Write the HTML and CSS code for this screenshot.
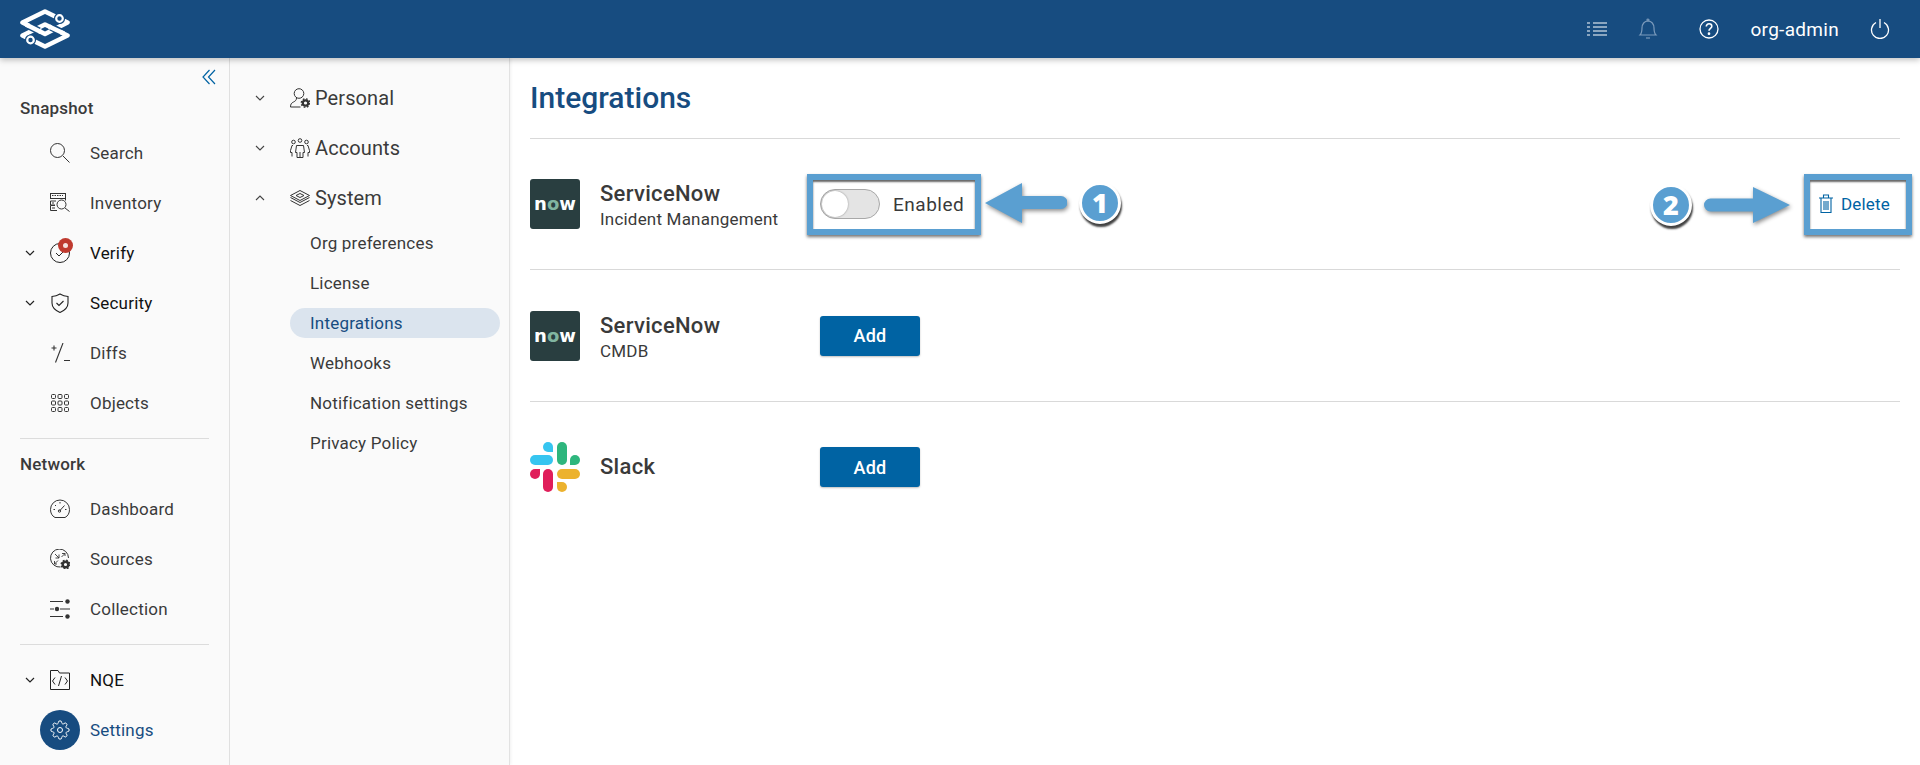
FILE: index.html
```html
<!DOCTYPE html>
<html lang="en">
<head>
<meta charset="utf-8">
<title>Integrations</title>
<link rel="stylesheet" href="styles.css">
</head>
<body>
<header class="topbar">
  <svg class="logo" viewBox="0 0 50 40" fill="none" stroke="#fff" stroke-width="4.600" stroke-linejoin="round">
    <path d="M2.500 26.500 25 15.500 47.500 26.500 25 37.500z"/>
    <path d="M2.500 13.500 25 2.500 47.500 13.500 25 25z"/>
    <path d="M9 17 19 22" stroke="#174c80" stroke-width="7.500"/>
    <path d="M6 15.500 21 23"/>
    <path d="M41 23 31 18" stroke="#174c80" stroke-width="7.500"/>
    <path d="M44 24.500 29 17.500"/>
    <circle cx="39.500" cy="9.500" r="5.600" fill="#174c80" stroke="none"/>
    <circle cx="39.500" cy="9.500" r="3.300" fill="#174c80" stroke-width="2.200"/>
    <circle cx="10.500" cy="31" r="5.600" fill="#174c80" stroke="none"/>
    <circle cx="10.500" cy="31" r="3.300" fill="#174c80" stroke-width="2.200"/>
  </svg>
  <div class="top-actions">
    <svg class="ti ti-list" viewBox="0 0 20 14" fill="none" stroke="#fff" stroke-width="1.200"><path d="M6 1h14M6 5h14M6 9h14M6 13h14M0 1h3M0 5h3M0 9h3M0 13h3"/></svg>
    <svg class="ti ti-bell" viewBox="0 0 20 22" fill="none" stroke="#7b9abb" stroke-width="1.200"><path d="M2 17c2-2 2-4 2-7 0-4 2.500-7 6-7s6 3 6 7c0 3 0 5 2 7z"/><path d="M8 20h4"/><circle cx="10" cy="2" r="1"/></svg>
    <svg class="ti ti-help" viewBox="0 0 20 20" fill="none" stroke="#fff" stroke-width="1.300"><circle cx="10" cy="10" r="9"/><path d="M7.300 7.500c0-1.600 1.200-2.700 2.800-2.700s2.700 1 2.700 2.400c0 2.200-2.800 2.200-2.800 4.600" stroke-width="1.600"/><circle cx="10" cy="14.700" r=".7" fill="#fff"/></svg>
    <span class="username">org-admin</span>
    <svg class="ti ti-power" viewBox="0 0 20 20" fill="none" stroke="#fff" stroke-width="1.300"><path d="M6 3.500a8.500 8.500 0 1 0 8 0"/><path d="M10 0v9"/></svg>
  </div>
</header>

<div class="body-row">
  <nav class="rail">
    <div class="collapse"><svg class="collapse-icon" viewBox="0 0 14 16" fill="none" stroke="#0063a3" stroke-width="1.200"><path d="M7.500 1 1 8l6.500 7M13 1 6.500 8l6.500 7"/></svg></div>
    <div class="heading">Snapshot</div>
    <a class="item"><span class="caret"></span><svg class="icon" viewBox="0 0 20 20" fill="none" stroke="#333"><circle cx="7.500" cy="7.500" r="7"/><path d="m13 13 6.500 6.500"/></svg><span>Search</span></a>
    <a class="item"><span class="caret"></span><svg class="icon" viewBox="0 0 20 20" fill="none" stroke="#333"><rect x=".5" y=".5" width="15" height="5"/><path d="M2 2.500h11" stroke-dasharray="1.500 1"/><path d="M6 8H.5v4H5M5 12.500H.5v5H7M15.500 5.500v2"/><path d="M2 10h2M2 15h3"/><circle cx="11.500" cy="11.500" r="4.500"/><path d="m15 15 4.500 3.500"/></svg><span>Inventory</span></a>
    <a class="item strong"><span class="caret"><svg viewBox="0 0 10 6" fill="none" stroke="#222" stroke-width="1.200"><path d="m1 1 4 4 4-4"/></svg></span><span class="icon-wrap"><svg class="icon" viewBox="0 0 20 20" fill="none" stroke="#222"><circle cx="10" cy="10" r="9.500"/><path d="m6 10 3 3 5-5"/></svg><span class="badge"></span></span><span>Verify</span></a>
    <a class="item strong"><span class="caret"><svg viewBox="0 0 10 6" fill="none" stroke="#222" stroke-width="1.200"><path d="m1 1 4 4 4-4"/></svg></span><svg class="icon" viewBox="0 0 20 20" fill="none" stroke="#222" stroke-width="1.100"><path d="M10 1c2.500 1.500 5 2.300 8 2.500V10c0 4.500-3.500 7.500-8 9.500C5.500 17.500 2 14.500 2 10V3.500C5 3.300 7.500 2.500 10 1z"/><path d="m6.500 10 2.500 2.500 4.500-4.500"/></svg><span>Security</span></a>
    <a class="item"><span class="caret"></span><svg class="icon" viewBox="0 0 20 20" fill="none" stroke="#333" stroke-width="1.100"><path d="M1.500 5h5M4 2.500v5M13 0 5.500 19.500M14 17.500h6"/></svg><span>Diffs</span></a>
    <a class="item"><span class="caret"></span><svg class="icon" viewBox="0 0 20 20" fill="none" stroke="#333"><rect x="1.500" y="1.500" width="4" height="4" rx="1"/><rect x="8" y="1.500" width="4" height="4" rx="1"/><rect x="14.500" y="1.500" width="4" height="4" rx="1"/><rect x="1.500" y="8" width="4" height="4" rx="1"/><rect x="8" y="8" width="4" height="4" rx="1"/><rect x="14.500" y="8" width="4" height="4" rx="1"/><rect x="1.500" y="14.500" width="4" height="4" rx="1"/><rect x="8" y="14.500" width="4" height="4" rx="1"/><rect x="14.500" y="14.500" width="4" height="4" rx="1"/></svg><span>Objects</span></a>
    <hr class="rule">
    <div class="heading">Network</div>
    <a class="item"><span class="caret"></span><svg class="icon" viewBox="0 0 20 20" fill="none" stroke="#333"><path d="M5 18.500C2 17 .5 14 .5 10.500a9.500 9.500 0 0 1 19 0c0 3.500-1.500 6.500-4.500 8z"/><path d="m9.500 12 5-5.500"/><circle cx="9.500" cy="12" r="1.200"/><path d="M10 3v1.500M3.500 10.500H5M15 10.500h1.500M5 6l1 1"/></svg><span>Dashboard</span></a>
    <a class="item"><span class="caret"></span><svg class="icon" viewBox="0 0 20 20" fill="none" stroke="#333"><path d="M10.500 18A9 9 0 1 1 18.500 9"/><path d="m5 5 4 4M9 5.500V9H5.500M15 4.500l-3.500 3.500M12 4.500h3V7M4.500 15l3.500-3.500M4.500 12v3H7" stroke-width=".9"/><circle cx="15.500" cy="15.500" r="2.800" fill="none" stroke="#333" stroke-width="2.400"/><circle cx="15.500" cy="15.500" r="4.300" stroke="#333" stroke-width="1.400" stroke-dasharray="1.700 1.700"/></svg><span>Sources</span></a>
    <a class="item"><span class="caret"></span><svg class="icon" viewBox="0 0 20 20" fill="none" stroke="#333"><path d="M0 2.500h13M0 10h4M10 10h10M0 17.500h13"/><circle cx="17.500" cy="2.500" r="2.200" fill="#333" stroke="none"/><circle cx="7" cy="10" r="2.200" fill="#333" stroke="none"/><circle cx="17.500" cy="17.500" r="2.200" fill="#333" stroke="none"/></svg><span>Collection</span></a>
    <hr class="rule">
    <a class="item strong"><span class="caret"><svg viewBox="0 0 10 6" fill="none" stroke="#222" stroke-width="1.200"><path d="m1 1 4 4 4-4"/></svg></span><svg class="icon" viewBox="0 0 20 20" fill="none" stroke="#222"><path d="M.5 19.500V.5h7.500l1.500 2.500h10v16.500z"/><path d="M5 7.500 2.500 11 5 14.500M15 7.500l2.500 3.500-2.500 3.500M11.500 6 8.500 16"/></svg><span>NQE</span></a>
    <a class="item active"><span class="caret"></span><span class="icon-disc"><svg class="icon" viewBox="0 0 24 24" fill="none" stroke="#fff" stroke-width="1.200"><circle cx="12" cy="12" r="3"/><path d="M19.400 15a1.650 1.650 0 0 0 .33 1.820l.06.06a2 2 0 0 1 0 2.830 2 2 0 0 1-2.830 0l-.06-.06a1.650 1.650 0 0 0-1.820-.33 1.650 1.650 0 0 0-1 1.510V21a2 2 0 0 1-2 2 2 2 0 0 1-2-2v-.09A1.650 1.650 0 0 0 9 19.400a1.650 1.650 0 0 0-1.820.33l-.06.06a2 2 0 0 1-2.830 0 2 2 0 0 1 0-2.830l.06-.06a1.650 1.650 0 0 0 .33-1.820 1.650 1.650 0 0 0-1.510-1H3a2 2 0 0 1-2-2 2 2 0 0 1 2-2h.09A1.650 1.650 0 0 0 4.600 9a1.650 1.650 0 0 0-.33-1.820l-.06-.06a2 2 0 0 1 0-2.830 2 2 0 0 1 2.830 0l.06.06a1.650 1.650 0 0 0 1.820.33H9a1.650 1.650 0 0 0 1-1.510V3a2 2 0 0 1 2-2 2 2 0 0 1 2 2v.09a1.650 1.650 0 0 0 1 1.510 1.650 1.650 0 0 0 1.820-.33l.06-.06a2 2 0 0 1 2.830 0 2 2 0 0 1 0 2.830l-.06.06a1.650 1.650 0 0 0-.33 1.820V9a1.650 1.650 0 0 0 1.510 1H21a2 2 0 0 1 2 2 2 2 0 0 1-2 2h-.09a1.650 1.650 0 0 0-1.510 1z"/></svg></span><span>Settings</span></a>
  </nav>

  <nav class="subnav">
    <a class="group"><span class="group-caret"><svg viewBox="0 0 10 6" fill="none" stroke="#444" stroke-width="1.100"><path d="m1 1 4 4 4-4"/></svg></span><svg class="group-icon" viewBox="0 0 20 20" fill="none" stroke="#333"><circle cx="9" cy="5.500" r="4.800"/><path d="M6.500 10c0 2-1 3-3 4-2 1-3 2-3 5h10"/><circle cx="15.500" cy="15" r="2.700" stroke-width="2.200"/><circle cx="15.500" cy="15" r="4.200" stroke-width="1.400" stroke-dasharray="1.700 1.600"/></svg><span>Personal</span></a>
    <a class="group"><span class="group-caret"><svg viewBox="0 0 10 6" fill="none" stroke="#444" stroke-width="1.100"><path d="m1 1 4 4 4-4"/></svg></span><svg class="group-icon" viewBox="0 0 20 20" fill="none" stroke="#333"><circle cx="10" cy="2.500" r="1.800"/><circle cx="3.500" cy="4" r="1.800"/><circle cx="16.500" cy="4" r="1.800"/><path d="M6.500 7.500h7l1 7h-1.500v5h-6v-5H5.500z"/><path d="M3 7.500h-1l-1.500 5v2h1.500v4M17 7.500h1l1.500 5v2H18v4M10 14v5"/></svg><span>Accounts</span></a>
    <a class="group"><span class="group-caret"><svg class="flip" viewBox="0 0 10 6" fill="none" stroke="#444" stroke-width="1.100"><path d="m1 1 4 4 4-4"/></svg></span><svg class="group-icon" viewBox="0 0 20 16" fill="none" stroke="#333"><path d="M10 .5 19.500 5.500 10 10.500.5 5.500z"/><path d="M.5 7.500 10 12.500l9.500-5M.5 10.500 10 15.500l9.500-5"/><path d="M6 5.500 10 3.500l4 2-4 2z"/></svg><span>System</span></a>
    <a class="link">Org preferences</a>
    <a class="link">License</a>
    <a class="link current">Integrations</a>
    <a class="link">Webhooks</a>
    <a class="link">Notification settings</a>
    <a class="link">Privacy Policy</a>
  </nav>

  <main class="main">
    <h1 class="title">Integrations</h1>
    <hr class="rule-main">
    <section class="row">
      <div class="sn-logo">n<span class="sn-o">o</span>w</div>
      <div class="row-text"><div class="row-name">ServiceNow</div><div class="row-sub">Incident Manangement</div></div>
      <div class="switch"><span class="track"><span class="thumb"></span></span><span class="switch-label">Enabled</span></div>
      <button class="delete"><svg class="trash" viewBox="0 0 14 20" fill="none" stroke="#0063a3" stroke-width="1.100"><path d="M0 4h14M4.500 3.500V1h5v2.500M2 4v14.500h10V4M5 7v9M7 7v9M9 7v9"/></svg>Delete</button>
    </section>
    <hr class="rule-main">
    <section class="row row-tall">
      <div class="sn-logo">n<span class="sn-o">o</span>w</div>
      <div class="row-text"><div class="row-name">ServiceNow</div><div class="row-sub">CMDB</div></div>
      <button class="add">Add</button>
    </section>
    <hr class="rule-main">
    <section class="row">
      <svg class="slack" viewBox="0 0 50 50">
        <rect x="0" y="13" width="23" height="10" rx="5" fill="#36c5f0"/><path d="M23 10h-5a5 5 0 1 1 5-5z" fill="#36c5f0"/>
        <rect x="27" y="0" width="10" height="23" rx="5" fill="#2eb67d"/><path d="M40 23v-5a5 5 0 1 1 5 5z" fill="#2eb67d"/>
        <rect x="27" y="27" width="23" height="10" rx="5" fill="#ecb22e"/><path d="M27 40h5a5 5 0 1 1-5 5z" fill="#ecb22e"/>
        <rect x="13" y="27" width="10" height="23" rx="5" fill="#e01e5a"/><path d="M10 27v5a5 5 0 1 1-5-5z" fill="#e01e5a"/>
      </svg>
      <div class="row-text"><div class="row-name">Slack</div></div>
      <button class="add">Add</button>
    </section>
  </main>
</div>

<div class="callout-box box-switch"></div>
<div class="callout-box box-delete"></div>
<svg class="arrow arrow-left" viewBox="0 0 82 40"><path d="M0 20 37 0v13h39a6.500 6.500 0 0 1 0 13H37v14z" fill="#5a9fd1"/></svg>
<svg class="arrow arrow-right" viewBox="0 0 86 36"><path d="M86 18 49 0v11.500H6.500a6.500 6.500 0 0 0 0 13H49V36z" fill="#5a9fd1"/></svg>
<div class="step step-1">1</div>
<div class="step step-2">2</div>
</body>
</html>
```
FILE: styles.css
```css
* { box-sizing: border-box; }
html, body { margin: 0; height: 100%; }
body {
  position: relative;
  height: 765px;
  overflow: hidden;
  background: #fff;
  color: #3a3a3a;
  font-family: Roboto, "Liberation Sans", sans-serif;
  font-size: 17px;
  display: flex;
  flex-direction: column;
}
.topbar {
  height: 58px;
  flex: none;
  background: #174c80;
  display: flex;
  align-items: center;
  justify-content: space-between;
  padding-left: 20px;
  box-shadow: 0 2px 6px rgba(0, 0, 0, .25);
  position: relative;
  z-index: 2;
}
.logo { width: 50px; height: 40px; display: block; }
.top-actions { display: flex; align-items: center; color: #fff; height: 100%; }
.ti { display: block; flex: none; }
.ti-list { width: 20px; height: 14px; margin-right: 31px; }
.ti-bell { width: 20px; height: 22px; margin-right: 41px; }
.ti-help { width: 20px; height: 20px; margin-right: 31px; }
.username { font-size: 19px; letter-spacing: .3px; margin-right: 31px; white-space: nowrap; }
.ti-power { width: 20px; height: 20px; margin-right: 30px; }

.body-row { flex: 1; display: flex; min-height: 0; }
.rail {
  width: 230px;
  flex: none;
  background: #fafafa;
  border-right: 1px solid #e2e2e2;
  padding: 0 20px;
}
.collapse { height: 36px; display: flex; justify-content: flex-end; align-items: flex-end; padding-bottom: 9px; margin-right: -7px; }
.collapse-icon { width: 14px; height: 16px; display: block; }
.heading { height: 28px; line-height: 29px; font-weight: 500; letter-spacing: .2px; margin-bottom: 6px; }
.rule { border: 0; border-top: 1px solid #dcdcdc; margin: 10px 0; }
.rule + .heading { margin-top: 11px; }
.item {
  height: 50px;
  display: flex;
  align-items: center;
  margin-left: -20px;
  letter-spacing: .2px;
  white-space: nowrap;
}
.item .caret { width: 50px; flex: none; padding-left: 25px; display: flex; }
.caret svg { width: 10px; height: 6px; display: block; }
.icon { width: 20px; height: 20px; display: block; flex: none; }
.item > .icon, .item > .icon-wrap { margin-right: 20px; }
.icon-wrap { position: relative; display: block; }
.badge {
  position: absolute;
  right: -3px;
  top: -5px;
  width: 15px;
  height: 15px;
  border-radius: 50%;
  background: #bf3a2f;
}
.badge::after {
  content: "";
  position: absolute;
  left: 5px;
  top: 5px;
  width: 5px;
  height: 5px;
  border-radius: 50%;
  background: #f5e2df;
}
.strong { color: #111; }
.active { color: #174c80; }
.active .caret { width: 40px; }
.icon-disc {
  width: 40px;
  height: 40px;
  border-radius: 50%;
  background: #174c80;
  display: flex;
  align-items: center;
  justify-content: center;
  margin-right: 10px;
  flex: none;
}

.subnav {
  width: 280px;
  flex: none;
  display: flex;
  flex-direction: column;
  background: #fafafa;
  border-right: 1px solid #e2e2e2;
  box-shadow: 1px 0 3px rgba(0, 0, 0, .06);
  padding-top: 15px;
}
.group {
  height: 50px;
  flex: none;
  display: flex;
  align-items: center;
  font-size: 20px;
  letter-spacing: .1px;
}
.group-caret { width: 60px; padding-left: 25px; flex: none; display: flex; }
.group-caret svg { width: 10px; height: 6px; display: block; }
.flip { transform: rotate(180deg); }
.group-icon { width: 20px; height: 20px; display: block; margin-right: 5px; flex: none; }
.link {
  display: block;
  flex: none;
  height: 30px;
  line-height: 30px;
  margin: 5px 9px 5px 60px;
  padding-left: 20px;
  border-radius: 15px;
  letter-spacing: .2px;
  white-space: nowrap;
}
.current { background: #dbe4ee; color: #174c80; }

.main { flex: 1; min-width: 0; padding: 0 20px; }
.title {
  margin: 0;
  height: 80px;
  line-height: 80px;
  font-size: 30px;
  font-weight: 500;
  color: #174c80;
}
.rule-main { border: 0; border-top: 1px solid #d9d9d9; margin: 0; }
.row { height: 130px; display: flex; align-items: center; }
.row-tall { height: 131px; }
.sn-logo {
  width: 50px;
  height: 50px;
  flex: none;
  border-radius: 3px;
  background: #293e40;
  color: #fff;
  font-family: "DejaVu Sans", Roboto, sans-serif;
  font-weight: 700;
  font-size: 18px;
  line-height: 49px;
  text-align: center;
}
.sn-o { color: #81b5a1; }
.slack { width: 50px; height: 50px; display: block; flex: none; }
.row-text { width: 220px; margin-left: 20px; flex: none; }
.row-name { font-size: 22px; font-weight: 500; line-height: 30px; letter-spacing: .3px; }
.row-sub { line-height: 20px; letter-spacing: .2px; }
.add {
  width: 100px;
  height: 40px;
  border: 0;
  border-radius: 3px;
  background: #0063a3;
  color: #fff;
  font: 500 18px Roboto, sans-serif;
  letter-spacing: .3px;
  box-shadow: 0 1px 2px rgba(0, 0, 0, .25);
}
.switch { display: flex; align-items: center; }
.track {
  display: block;
  width: 60px;
  height: 30px;
  border-radius: 15px;
  background: #e4e4e4;
  border: 1px solid #a8a8a8;
  position: relative;
}
.thumb {
  position: absolute;
  left: 1px;
  top: 1px;
  width: 26px;
  height: 26px;
  border-radius: 50%;
  background: #fff;
  box-shadow: 0 0 2px rgba(0, 0, 0, .4);
}
.switch-label { font-size: 19px; letter-spacing: .5px; margin-left: 13px; }
.delete {
  margin-left: auto;
  margin-right: 10px;
  display: flex;
  align-items: center;
  border: 0;
  background: none;
  padding: 0;
  color: #0063a3;
  font: 400 17px Roboto, sans-serif;
  letter-spacing: .2px;
}
.trash { width: 14px; height: 20px; margin-right: 8px; display: block; }

/* Annotations drawn on top of the screenshot */
.callout-box {
  position: absolute;
  top: 174px;
  height: 61px;
  border: 6px solid #5a9fd1;
  box-shadow: 0 2px 3px rgba(0, 0, 0, .55), inset 0 2px 2px rgba(0, 0, 0, .6);
}
.box-switch { left: 807px; width: 174px; }
.box-delete { left: 1804px; width: 108px; }
.arrow { position: absolute; filter: drop-shadow(1px 2px 2px rgba(0, 0, 0, .45)); }
.arrow-left { left: 985px; top: 183px; width: 82px; height: 40px; }
.arrow-right { left: 1704px; top: 187px; width: 86px; height: 36px; }
.step {
  position: absolute;
  width: 42px;
  height: 42px;
  border-radius: 50%;
  background: #5a9fd1;
  border: 3px solid #fff;
  box-shadow: 1px 3px 2px rgba(0, 0, 0, .75);
  color: #fff;
  font-family: "Open Sans", Roboto, sans-serif;
  font-weight: 800;
  font-size: 27px;
  line-height: 35px;
  text-align: center;
}
.step-1 { left: 1079px; top: 182px; }
.step-2 { left: 1650px; top: 184px; }
```
